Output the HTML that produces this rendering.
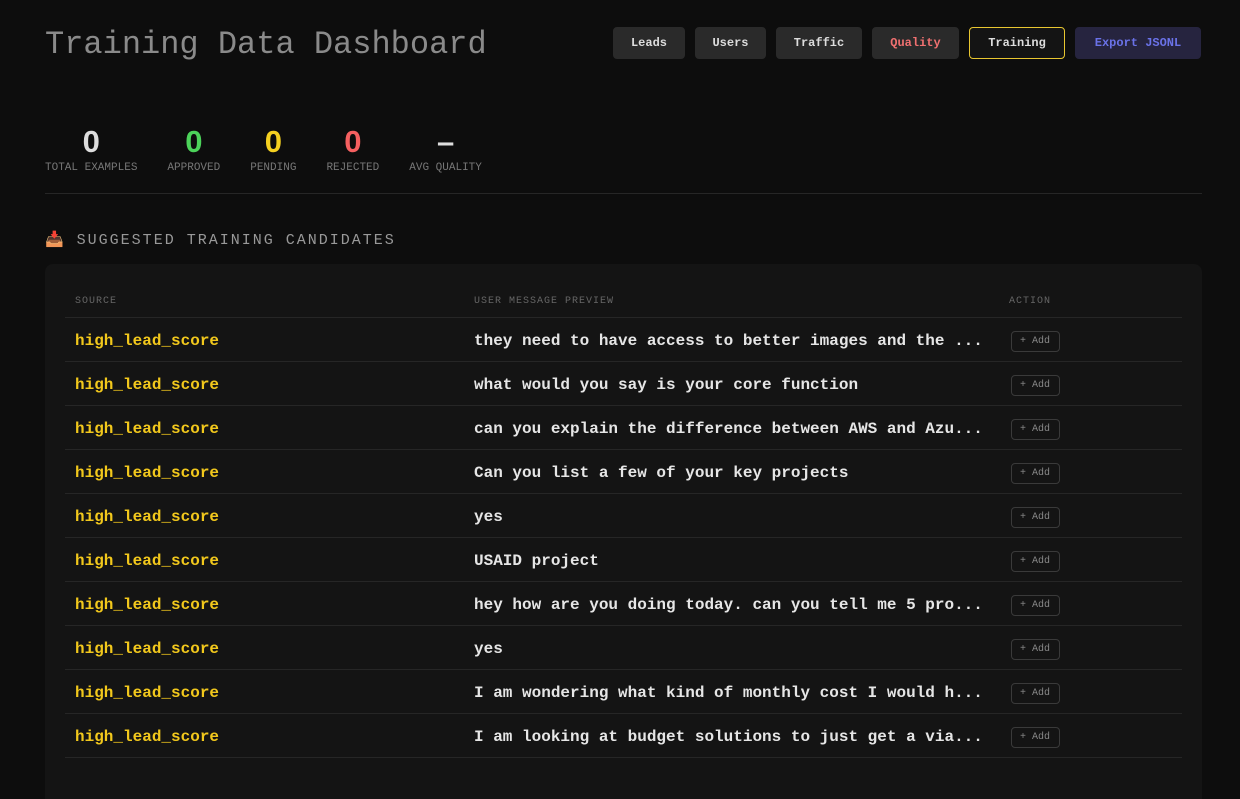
<!DOCTYPE html>
<html><head><meta charset="utf-8"><style>
*{box-sizing:border-box;margin:0;padding:0}
html,body{width:1240px;height:799px;overflow:hidden}
body{background:#0d0d0d;font-family:"Liberation Mono",monospace;color:#e0e0e0;position:relative}
h1{position:absolute;left:45px;top:26px;font-size:32px;font-weight:normal;color:#8a8a8a;letter-spacing:0}
.nav{position:absolute;top:27px;left:613px;display:flex;gap:10px}
.nav div{height:32px;line-height:30px;text-align:center;border-radius:4px;background:#2a2a2a;font-size:12px;font-weight:bold;color:#ddd;border:1px solid #2a2a2a}
.nav .q{color:#f07070}
.nav .t{background:#141414;border-color:#e8c630}
.nav .e{background:#26243f;border-color:#26243f;color:#6a72e8}
.stats{position:absolute;left:45px;top:124px;display:flex;gap:30px}
.st{text-align:center}
.st b{display:block;font-family:"Liberation Sans",sans-serif;font-size:31px;line-height:36px}
.st span{font-size:11px;color:#777;display:block;margin-top:2px}
hr{position:absolute;left:45px;top:193px;width:1157px;border:0;border-top:1px solid #262626}
.sec{position:absolute;left:45px;top:230px;font-size:15px;color:#999;letter-spacing:2px}
.card{position:absolute;left:45px;top:264px;width:1157px;height:535px;background:#141414;border-radius:8px 8px 0 0}
table{position:absolute;left:20px;top:20px;width:1117px;border-collapse:collapse}
th{font-size:10px;font-weight:normal;color:#666;text-align:left;height:33px;padding-top:2px;letter-spacing:1px;border-bottom:1px solid #262626;padding-left:10px}
td{height:44px;border-bottom:1px solid #262626;font-size:16px;font-weight:bold;padding-left:10px;padding-top:3px;color:#e6e6e6}
td.s{color:#f2c81c}
.add{display:inline-block;margin-left:2px;font-size:10px;font-weight:normal;color:#888;border:1px solid #3a3a3a;border-radius:4px;padding:4px 9px 4px 8px}
</style></head><body>
<h1>Training Data Dashboard</h1>
<div class="nav"><div style="width:72px">Leads</div><div style="width:71px">Users</div><div style="width:86px">Traffic</div><div class="q" style="width:87px">Quality</div><div class="t" style="width:96px">Training</div><div class="e" style="width:126px">Export JSONL</div></div>
<div class="stats">
<div class="st"><b style="color:#ddd">0</b><span>TOTAL EXAMPLES</span></div>
<div class="st"><b style="color:#4cd35a">0</b><span>APPROVED</span></div>
<div class="st"><b style="color:#f5d020">0</b><span>PENDING</span></div>
<div class="st"><b style="color:#f56060">0</b><span>REJECTED</span></div>
<div class="st"><b style="color:#ddd">–</b><span>AVG QUALITY</span></div>
</div>
<hr>
<div class="sec">📥 SUGGESTED TRAINING CANDIDATES</div>
<div class="card"><table>
<tr><th style="width:399px">SOURCE</th><th style="width:535px">USER MESSAGE PREVIEW</th><th>ACTION</th></tr>
<tr><td class="s">high_lead_score</td><td>they need to have access to better images and the ...</td><td><span class="add">+ Add</span></td></tr>
<tr><td class="s">high_lead_score</td><td>what would you say is your core function</td><td><span class="add">+ Add</span></td></tr>
<tr><td class="s">high_lead_score</td><td>can you explain the difference between AWS and Azu...</td><td><span class="add">+ Add</span></td></tr>
<tr><td class="s">high_lead_score</td><td>Can you list a few of your key projects</td><td><span class="add">+ Add</span></td></tr>
<tr><td class="s">high_lead_score</td><td>yes</td><td><span class="add">+ Add</span></td></tr>
<tr><td class="s">high_lead_score</td><td>USAID project</td><td><span class="add">+ Add</span></td></tr>
<tr><td class="s">high_lead_score</td><td>hey how are you doing today. can you tell me 5 pro...</td><td><span class="add">+ Add</span></td></tr>
<tr><td class="s">high_lead_score</td><td>yes</td><td><span class="add">+ Add</span></td></tr>
<tr><td class="s">high_lead_score</td><td>I am wondering what kind of monthly cost I would h...</td><td><span class="add">+ Add</span></td></tr>
<tr><td class="s">high_lead_score</td><td>I am looking at budget solutions to just get a via...</td><td><span class="add">+ Add</span></td></tr>
</table></div>
</body></html>
